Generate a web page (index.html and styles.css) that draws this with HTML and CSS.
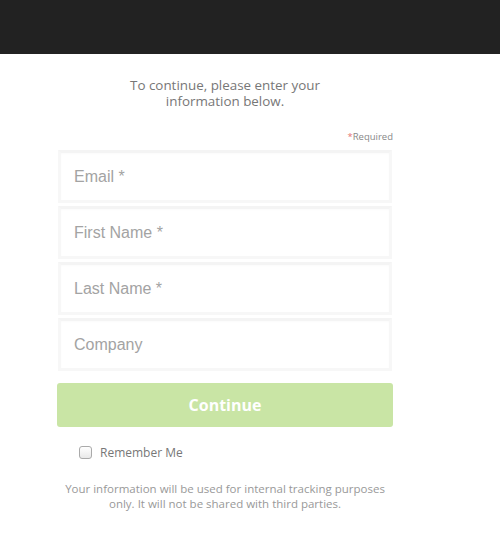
FILE: index.html
```html
<!DOCTYPE html>
<html>
<head>
<meta charset="utf-8">
<link rel="stylesheet" href="styles.css">
</head>
<body>
<div class="topbar"></div>
<div class="content">
  <p class="intro">To continue, please enter your<br>information below.</p>
  <div class="required"><span class="star">*</span>Required</div>
  <div class="fields">
    <div class="field">Email *</div>
    <div class="field">First Name *</div>
    <div class="field">Last Name *</div>
    <div class="field">Company</div>
  </div>
  <button class="btn">Continue</button>
  <label class="remember"><span class="box"></span>Remember Me</label>
  <p class="note">Your information will be used for internal tracking purposes<br>only. It will not be shared with third parties.</p>
</div>
</body>
</html>
```
FILE: styles.css
```css
html, body { margin: 0; padding: 0; background: #fff; }
body { font-family: "Open Sans", "Noto Sans", sans-serif; }
.topbar { height: 54px; background: #222222; }
.content { width: 336px; margin-left: 57px; display: flex; flex-direction: column; }
.intro { margin: 23px 0 0 0; text-align: center; font-size: 13.4px; line-height: 16px; color: #777; }
.required { margin-top: 22px; text-align: right; font-size: 9.5px; line-height: 12px; color: #888; }
.star { color: #e57373; }
.fields { margin-top: 7px; display: flex; flex-direction: column; gap: 3px; padding-left: 1px; width: 334px; }
.field { box-sizing: border-box; height: 53px; border: 3px solid #f7f7f7; border-top-color: #f4f4f4; box-shadow: inset 0 1px 2px rgba(0,0,0,0.02); padding: 0 13px; display: flex; align-items: center; font-family: "Liberation Sans", Arial, sans-serif; font-size: 16px; color: #a3a3a3; }
.btn { margin-top: 12px; height: 44px; width: 336px; border: none; border-radius: 3px; background: #c9e5a5; color: #fff; font-family: "Open Sans", sans-serif; font-weight: 700; font-size: 16px; }
.remember { margin: 17px 0 0 22px; display: flex; align-items: center; gap: 8px; font-size: 12px; color: #777; }
.box { width: 11px; height: 11px; border: 1px solid #aaa; border-radius: 3px; background: linear-gradient(#fff, #e8e8e8); }
.note { margin: 20px 0 0 0; text-align: center; font-size: 11.5px; line-height: 15px; color: #999; }
```
